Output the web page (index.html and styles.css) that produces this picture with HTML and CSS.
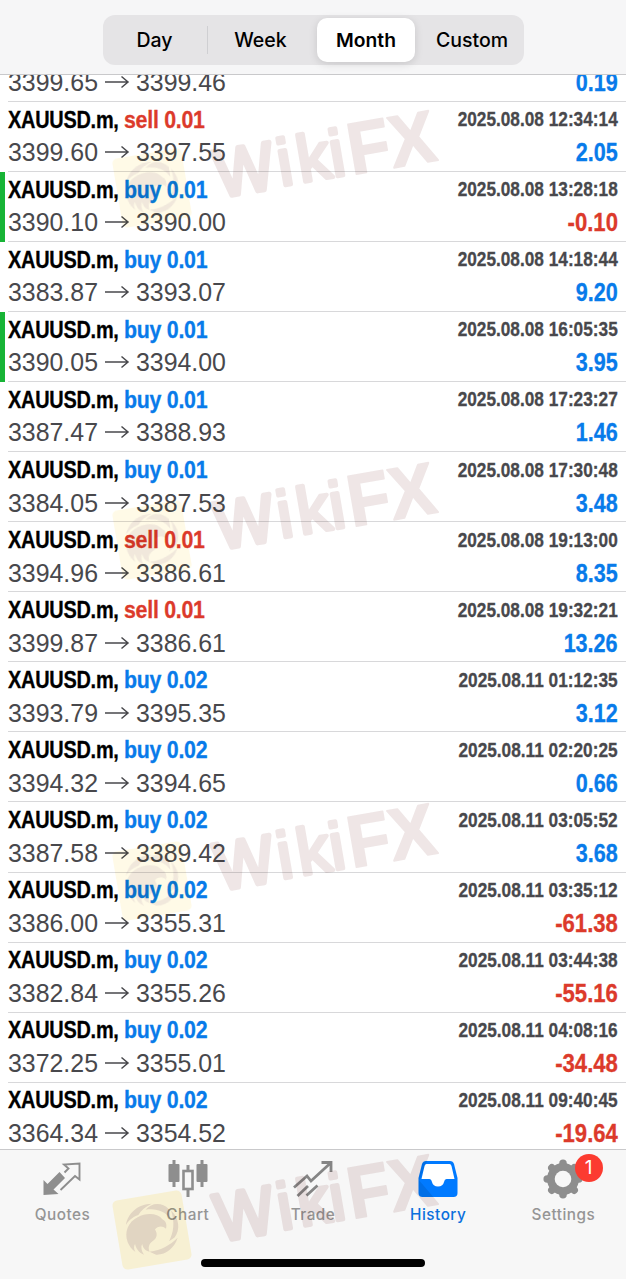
FILE: index.html
```html
<!DOCTYPE html>
<html lang="en">
<head>
    <meta charset="UTF-8">
    <meta name="viewport" content="width=device-width, initial-scale=1.0">
    <title>History</title>
    <link rel="stylesheet" href="styles.css">
</head>
<body>

<header>
    <div class="segments">
        <button class="day">Day</button>
        <button class="week">Week</button>
        <button class="month active">Month</button>
        <button class="custom">Custom</button>
    </div>
</header>

<main id="deals">
    <!-- deals will appear here -->
</main>

<nav>
    <a class="tab">
        <svg width="40" height="40" viewBox="0 0 40 40">
            <path d="M0.500 36V21L4.500 25L16.500 13L22 19L10.500 30.500L15.500 35Z" fill="#8e8e8e"/>
            <path d="M21.500 13.500L25.500 9.500L21 5.500L36.500 4.500V20.500L32 17L17.500 31" fill="none" stroke="#8e8e8e" stroke-width="1.900"/>
        </svg>
        <span>Quotes</span>
    </a>
    <a class="tab">
        <svg width="40" height="40" viewBox="0 0 40 40" fill="#8e8e8e">
            <path d="M4.500 1h3v27h-3zM32.500 1h3v27h-3zM18.500 6h3v6h-3zM18.500 31h3v7h-3z"/>
            <rect x="0.500" y="5" width="11" height="18" rx="1"/>
            <rect x="28.500" y="5" width="11" height="18" rx="1"/>
            <rect x="15.500" y="12" width="9" height="18" fill="none" stroke="#8e8e8e" stroke-width="2.600"/>
        </svg>
        <span>Chart</span>
    </a>
    <a class="tab">
        <svg width="40" height="40" viewBox="0 0 40 40" fill="none" stroke="#858585" stroke-width="2.800">
            <path d="M1 28.500L14 17L18 22L37 4.500M28.500 3.500H38V13"/>
            <path d="M4.500 37L15 27M13.500 36.500L24.500 26.500"/>
        </svg>
        <span>Trade</span>
    </a>
    <a class="tab active">
        <svg width="40" height="40" viewBox="0 0 40 40">
            <path d="M8 2H32Q35 2 36 5L39.500 19V34Q39.500 38 35.500 38H4.500Q0.500 38 0.500 34V19L4 5Q5 2 8 2Z" fill="#007aff"/>
            <path d="M8.500 5H31.500Q33 5 33.500 7L36.500 20H28.500Q26.500 20 26.200 22.500Q25 27.500 20 27.500Q15 27.500 13.800 22.500Q13.500 20 11.500 20H3.500L6.500 7Q7 5 8.500 5Z" fill="#fff"/>
        </svg>
        <span>History</span>
    </a>
    <a class="tab">
        <svg width="40" height="40" viewBox="-20 -20 40 40">
            <circle r="12" fill="none" stroke="#8e8e8e" stroke-width="8"/>
            <g stroke="#8e8e8e" stroke-width="7.500" stroke-linecap="round">
                <path d="M0 -15.800V15.800M-15.800 0H15.800M-11.200 -11.200L11.200 11.200M-11.200 11.200L11.200 -11.200"/>
            </g>
            <circle r="8.300" fill="#f7f7f7"/>
        </svg>
        <b class="badge">1</b>
        <span>Settings</span>
    </a>
</nav>
<div class="home-bar"></div>

<svg class="watermark" width="626" height="1279" viewBox="0 0 626 1279">
    <defs>
        <g id="logo" transform="translate(152 188) rotate(-9.500)">
            <rect x="-35" y="-35" width="70" height="70" rx="5" fill="#ffdc46" opacity="0.200"/>
            <g fill="#7b4b70" opacity="0.160">
                <!-- eagle head -->
                <path d="M-26 8C-28 -3 -22 -12 -12 -15C-3 -18 8 -16 12 -9C15 -7 16 -3 14 1C11 -3 6 -3 3 0C5 4 4 9 -1 11C-5 13 -7 16 -6 21C-10 20 -12 16 -12 12C-14 15 -14 19 -12 23C-17 20 -19 15 -19 11C-21 13 -21 16 -20 19C-23 16 -25 12 -26 8Z"/>
                <!-- ring blades -->
                <path d="M-25 -9C-21 -21 -9 -28 4 -26C-3 -24 -8 -21 -11 -17C-17 -16 -22 -13 -25 -9Z"/>
                <path d="M-3 -21C5 -28 15 -25 20 -18L20 -8C16 -16 8 -21 -3 -21Z"/>
                <path d="M22 -16C29 -7 28 5 21 11L15 14C21 6 24 -4 22 -16Z"/>
                <path d="M24 12C19 22 9 27 0 25L-6 21C6 22 15 18 24 12Z"/>
            </g>
        </g>
        <g id="word" class="word" transform="translate(222 197) rotate(-9.700)">
            <text class="w" x="-3" y="0" textLength="59" lengthAdjust="spacingAndGlyphs">W</text>
            <text class="iki" x="60 80 113" y="-1">iki</text>
            <text class="fx" x="132" y="0" textLength="88" lengthAdjust="spacingAndGlyphs">FX</text>
        </g>
    </defs>
    <g class="faint">
        <use href="#logo"/>
        <use href="#logo" y="352"/>
        <use href="#logo" y="693"/>
    </g>
    <use href="#logo" y="1042"/>
    <use href="#word"/>
    <use href="#word" y="352"/>
    <use href="#word" y="693"/>
    <use href="#word" y="1044"/>
</svg>

<script>
// side, volume, open price, close price, time, profit, marked
const deals = [
    ['buy', '0.01', '3399.65', '3399.46', '2025.08.08 12:30:02', '0.19'],
    ['sell', '0.01', '3399.60', '3397.55', '2025.08.08 12:34:14', '2.05'],
    ['buy', '0.01', '3390.10', '3390.00', '2025.08.08 13:28:18', '-0.10', true],
    ['buy', '0.01', '3383.87', '3393.07', '2025.08.08 14:18:44', '9.20'],
    ['buy', '0.01', '3390.05', '3394.00', '2025.08.08 16:05:35', '3.95', true],
    ['buy', '0.01', '3387.47', '3388.93', '2025.08.08 17:23:27', '1.46'],
    ['buy', '0.01', '3384.05', '3387.53', '2025.08.08 17:30:48', '3.48'],
    ['sell', '0.01', '3394.96', '3386.61', '2025.08.08 19:13:00', '8.35'],
    ['sell', '0.01', '3399.87', '3386.61', '2025.08.08 19:32:21', '13.26'],
    ['buy', '0.02', '3393.79', '3395.35', '2025.08.11 01:12:35', '3.12'],
    ['buy', '0.02', '3394.32', '3394.65', '2025.08.11 02:20:25', '0.66'],
    ['buy', '0.02', '3387.58', '3389.42', '2025.08.11 03:05:52', '3.68'],
    ['buy', '0.02', '3386.00', '3355.31', '2025.08.11 03:35:12', '-61.38'],
    ['buy', '0.02', '3382.84', '3355.26', '2025.08.11 03:44:38', '-55.16'],
    ['buy', '0.02', '3372.25', '3355.01', '2025.08.11 04:08:16', '-34.48'],
    ['buy', '0.02', '3364.34', '3354.52', '2025.08.11 09:40:45', '-19.64']
];

const arrow = '<svg class="arrow" width="26" height="14" viewBox="0 0 26 14"><path d="M1 7H24M17.500 1.500L24 7L17.500 12.500"/></svg>';

document.getElementById('deals').innerHTML = deals.map(([side, volume, open, close, time, profit, marked], i) => {
    // the first deal is scrolled under the header, only its prices show
    const top = i === 0 ? '' : `
        <div class="line">
            <div class="symbol"><span class="ticker">XAUUSD.m,</span><span class="order ${side}">${side} ${volume}</span></div>
            <div class="time">${time}</div>
        </div>`;
    return `
    <div class="deal${marked ? ' marked' : ''}${i === 0 ? ' cut' : ''}">${top}
        <div class="line">
            <div class="prices">${open}${arrow}${close}</div>
            <div class="profit${profit[0] === '-' ? ' loss' : ''}">${profit}</div>
        </div>
    </div>`;
}).join('');
</script>

</body>
</html>
```
FILE: styles.css
```css
* {
    box-sizing: border-box;
}
body {
    margin: 0;
    height: 1279px;
    position: relative;
    display: flex;
    flex-direction: column;
    overflow: hidden;
    background: #fff;
    font-family: "Liberation Sans", Arial, sans-serif;
}
header {
    height: 75px;
    flex: none;
    padding: 15px 0 0 103px;
    background: #f6f6f7;
    border-bottom: 1px solid #c9c9cb;
}
.segments {
    display: flex;
    width: 421px;
    height: 50px;
    padding: 3px;
    border-radius: 12px;
    background: #e5e4e6;
}
.segments button {
    padding: 0;
    border: none;
    border-radius: 10px;
    background: none;
    font-family: Inter, sans-serif;
    font-size: 19.500px;
    font-weight: 450;
    color: #000;
}
.segments .day {
    width: 102px;
    padding-right: 5px;
    border-radius: 0;
    background: linear-gradient(#cfcfd2, #cfcfd2) right center / 1px 28px no-repeat;
}
.week {
    width: 105px;
    margin-right: 4px;
}
.month {
    width: 98px;
}
.segments .custom {
    flex: 1;
    padding-left: 8px;
}
.segments .active {
    background: #fff;
    font-size: 19.300px;
    font-weight: 600;
    box-shadow: 0 2px 8px rgba(0, 0, 0, 0.130);
}
main {
    height: 1074px;
    flex: none;
    overflow: hidden;
}
.deal {
    height: 70.050px;
    padding: 1.300px 8px 0;
    background: linear-gradient(#d8d8da, #d8d8da) 8px bottom / 100% 1px no-repeat;
}
.deal.marked {
    border-left: 5px solid #18b436;
    padding-left: 3px;
    background-position-x: 3px;
}
.deal.cut {
    display: flex;
    flex-direction: column;
    justify-content: flex-end;
    height: 27px;
    padding: 0 8px 3px;
}
.line {
    display: flex;
    flex: none;
    justify-content: space-between;
    align-items: center;
    height: 33px;
    white-space: nowrap;
}
.symbol, .time, .profit {
    font-weight: bold;
    -webkit-text-stroke: 0.300px;
}
/* condensed look */
.ticker, .order {
    display: inline-block;
    transform: scaleX(0.830);
    transform-origin: left;
}
.time, .profit {
    transform: scaleX(0.862);
    transform-origin: right;
}
.symbol {
    display: flex;
    font-size: 24px;
    letter-spacing: -0.300px;
    color: #000;
}
.ticker {
    width: 116px;
}
.order {
    transform: scaleX(0.890);
}
.buy {
    color: #087bea;
}
.sell, .profit.loss {
    color: #dc3a2b;
}
.time {
    font-size: 20px;
    color: #48484c;
}
.prices {
    font-size: 24.900px;
    color: #48484c;
}
.arrow {
    margin: 0 6px;
    vertical-align: 2px;
    fill: none;
    stroke: #48484c;
    stroke-width: 1.500;
}
.profit {
    font-size: 25px;
    color: #087bea;
}
.profit.loss {
    transform: scaleX(0.885);
}
nav {
    height: 130px;
    flex: none;
    display: flex;
    background: #f7f7f7;
    border-top: 1px solid #c9c9cb;
}
.tab {
    flex: 1;
    position: relative;
    display: flex;
    flex-direction: column;
    align-items: center;
    padding-top: 9px;
    font-family: Inter, sans-serif;
    font-size: 15.300px;
    font-weight: 450;
    letter-spacing: 0.500px;
    color: #959595;
}
.tab span {
    margin-top: 6px;
    line-height: 20px;
}
.tab.active {
    color: #0a70dd;
}
.badge {
    position: absolute;
    left: 74px;
    top: 4px;
    width: 28px;
    height: 28px;
    border-radius: 50%;
    background: #fc3b30;
    color: #fff;
    font-size: 19px;
    font-weight: 400;
    line-height: 28px;
    text-align: center;
}
.home-bar {
    position: absolute;
    left: 201px;
    bottom: 12px;
    width: 224px;
    height: 8px;
    border-radius: 4px;
    background: #000;
}
.watermark {
    position: absolute;
    left: 0;
    top: 0;
    pointer-events: none;
    mix-blend-mode: multiply;
}
.faint {
    opacity: 0.650;
}
.word {
    opacity: 0.110;
    fill: #6e2323;
    stroke: #6e2323;
    stroke-linejoin: round;
    font-family: "Liberation Sans", sans-serif;
}
.w {
    font-size: 67px;
    stroke-width: 5px;
}
.iki {
    font-size: 66px;
    stroke-width: 4px;
}
.fx {
    font-size: 73px;
    font-weight: bold;
    stroke-width: 2px;
}
```
